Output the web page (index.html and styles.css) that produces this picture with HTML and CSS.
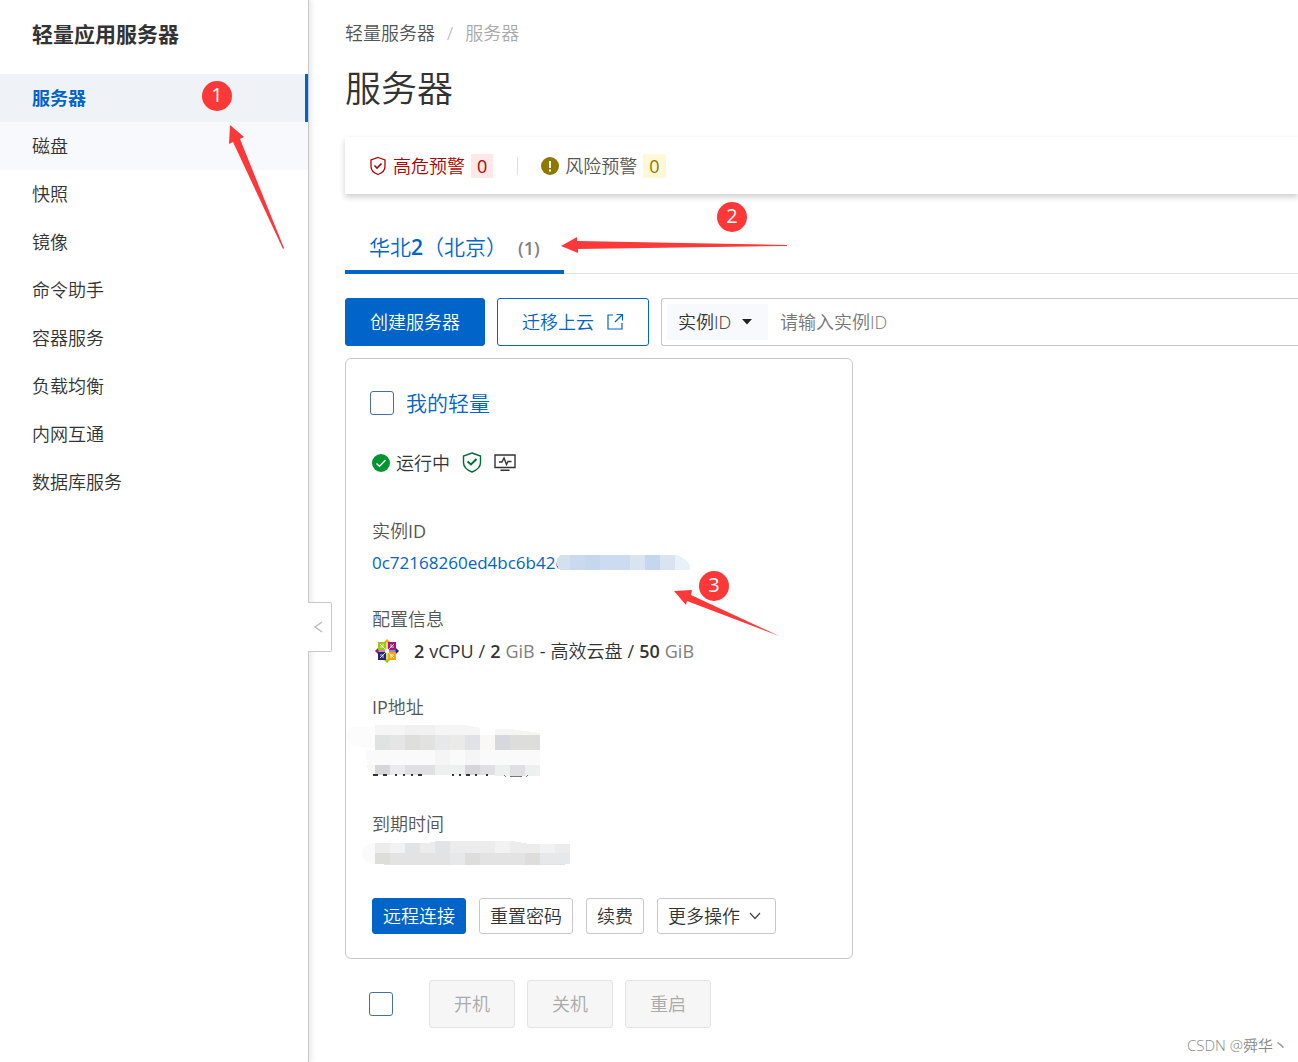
FILE: index.html
```html
<!DOCTYPE html>
<html lang="zh-CN">

<head>
    <meta charset="UTF-8">
    <meta name="viewport" content="width=device-width, initial-scale=1.0">
    <title>轻量应用服务器</title>
    <link rel="stylesheet" href="styles.css">
</head>

<body>

    <aside class="sidebar">
        <h2 class="sidebar-title">轻量应用服务器</h2>
        <nav class="menu">
            <a href="#" class="active">服务器</a>
            <a href="#" class="hovered">磁盘</a>
            <a href="#">快照</a>
            <a href="#">镜像</a>
            <a href="#">命令助手</a>
            <a href="#">容器服务</a>
            <a href="#">负载均衡</a>
            <a href="#">内网互通</a>
            <a href="#">数据库服务</a>
        </nav>
        <button type="button" class="collapse" aria-label="收起菜单">
            <svg width="10" height="12" viewBox="0 0 10 12"><path d="M9 1 L2 6 L9 11" fill="none" stroke="#b5b5b5" stroke-width="1.2"/></svg>
        </button>
    </aside>

    <main class="content">
        <nav class="breadcrumb">
            <a href="#">轻量服务器</a>
            <span class="sep">/</span>
            <span class="current">服务器</span>
        </nav>
        <h1>服务器</h1>

        <section class="alerts">
            <div class="alert danger">
                <svg width="18" height="20" viewBox="0 0 18 20" fill="none" stroke="#b30000" stroke-width="1.3"><path d="M9 1.5 L16 4 V10.5 C16 14 13 17 9 18.5 C5 17 2 14 2 10.5 V4 Z"/><path d="M5.5 9.5 L8 12 L12.5 7.5" stroke-width="1.6"/></svg>
                <span>高危预警</span>
                <span class="count">0</span>
            </div>
            <div class="alert warning">
                <svg width="18" height="18" viewBox="0 0 18 18"><circle cx="9" cy="9" r="9" fill="#8f7700"/><path d="M8 4 H10 V11 H8 Z M8 12.5 H10 V14.5 H8 Z" fill="#fff"/></svg>
                <span>风险预警</span>
                <span class="count">0</span>
            </div>
        </section>

        <div class="tabs">
            <a href="#" class="tab">华北<b>2</b>（北京）<span class="tab-count">(1)</span></a>
        </div>

        <div class="toolbar">
            <button type="button" class="btn primary">创建服务器</button>
            <button type="button" class="btn outline">迁移上云
                <svg width="18" height="18" viewBox="0 0 18 18" fill="none" stroke="#0064c8" stroke-width="1.2"><path d="M7 2 H2 V16 H16 V10"/><path d="M10.5 1.5 H16.5 V7.5 M16 2 L9 9"/></svg>
            </button>
            <div class="search">
                <div class="select-wrap">
                    <select aria-label="搜索类型">
                        <option>实例ID</option>
                    </select>
                    <svg class="caret" width="10" height="6" viewBox="0 0 10 6"><path d="M0 0 H10 L5 5.5 Z" fill="#222"/></svg>
                </div>
                <input type="text" aria-label="实例ID" placeholder="请输入实例ID">
            </div>
        </div>

        <article class="card">
            <div class="card-title">
                <input type="checkbox" id="server1">
                <label for="server1">我的轻量</label>
            </div>
            <div class="status">
                <svg width="18" height="18" viewBox="0 0 18 18"><circle cx="9" cy="9" r="9" fill="#00962f"/><path d="M4.5 9.5 L7.5 12.2 L13.5 6.2" fill="none" stroke="#fff" stroke-width="1.5"/></svg>
                <span>运行中</span>
                <svg class="shield" width="20" height="22" viewBox="0 0 20 22" fill="none" stroke="#006b35" stroke-width="1.4"><path d="M10 1 L18.5 4 V10.5 C18.5 15 15 18 10 20 C5 18 1.5 15 1.5 10.5 V4 Z"/><path d="M5.5 9.5 L9 12.5 L14.5 7" stroke-width="2"/></svg>
                <svg class="monitor" width="22" height="18" viewBox="0 0 22 18" fill="none" stroke="#333" stroke-width="1.4"><path d="M1 1 H21 V13.5 H1 Z M6.5 16.3 H15.5"/><path d="M5 8 H8 L10 4 L12.5 10.5 L14 7.5 H17.5" stroke-width="1.4"/></svg>
            </div>

            <div class="field">
                <div class="field-label">实例<b>ID</b></div>
                <div class="field-value id-value">
                    <a href="#">0c72168260ed4bc6b42c</a>
                    <svg class="mask" width="134" height="15" viewBox="0 0 134 15" shape-rendering="crispEdges">
                        <path d="M4 0 H14 V15 H4 Q-3 7 4 0" fill="#d3e0f2"/>
                        <path d="M14 0 H29 V15 H14 Z" fill="#cbd9f0"/>
                        <path d="M29 0 H44 V15 H29 Z M89 0 H104 V15 H89 Z" fill="#c6d6ef"/>
                        <path d="M44 0 H74 V15 H44 Z" fill="#ccdbf2"/>
                        <path d="M74 0 H89 V15 H74 Z M104 0 H119 V15 H104 Z" fill="#d8e3f4"/>
                        <path d="M119 0 H121 Q131 4 134 11 V15 H119 Z" fill="#e8f0fa"/>
                    </svg>
                </div>
            </div>

            <div class="field">
                <div class="field-label">配置信息</div>
                <div class="field-value specs">
                    <svg class="os" width="24" height="24" viewBox="0 0 24 24">
                        <path d="M12 0 L15.5 3.5 H8.5 Z" fill="#f5a70b"/>
                        <path d="M24 12 L20.5 15.5 V8.5 Z" fill="#262577"/>
                        <path d="M12 24 L15.5 20.5 H8.5 Z" fill="#96c80f"/>
                        <path d="M0 12 L3.5 15.5 V8.5 Z" fill="#a1167c"/>
                        <path d="M3 3 H11 V11 H3 Z" fill="#96cd12"/>
                        <path d="M13 3 H21 V11 H13 Z" fill="#a1167c"/>
                        <path d="M3 13 H11 V21 H3 Z" fill="#262577"/>
                        <path d="M13 13 H21 V21 H13 Z" fill="#f5a70b"/>
                        <path d="M12 2 V10" stroke="#f5a70b"/>
                        <path d="M14 12 H22" stroke="#262577"/>
                        <path d="M12 14 V22" stroke="#96c80f"/>
                        <path d="M2 12 H10" stroke="#a1167c"/>
                        <path d="M5 5 L19 19 M19 5 L5 19 M8 5 V8 H5 M16 5 V8 H19 M8 19 V16 H5 M16 19 V16 H19" fill="none" stroke="#fff" stroke-width="0.8"/>
                    </svg>
                    <b>2</b>
                    <span>vCPU</span>
                    <span>/</span>
                    <b>2</b>
                    <span class="unit">GiB</span>
                    <span>-</span>
                    <span class="disk">高效云盘</span>
                    <span>/</span>
                    <b>50</b>
                    <span class="unit">GiB</span>
                </div>
            </div>

            <div class="field">
                <div class="field-label"><b>IP</b>地址</div>
                <svg class="mosaic" width="196" height="69" viewBox="0 0 196 69" shape-rendering="crispEdges">
                    <path d="M13 8 Q0 7 0 17 Q0 28 13 28 H28 V8 Z" fill="#fcfcfc"/>
                    <path d="M28 6 H118 L133 9 V16 H28 Z" fill="#f5f5f5"/>
                    <path d="M58 6 H88 V16 H58 Z" fill="#f1f1f1"/>
                    <path d="M148 10 H163 L193 14 V16 H148 Z" fill="#f5f5f4"/>
                    <path d="M28 16 H43 V31 H28 Z" fill="#e1e3e2"/>
                    <path d="M43 16 H58 V31 H43 Z" fill="#e5e5e5"/>
                    <path d="M58 16 H73 V31 H58 Z" fill="#dededc"/>
                    <path d="M73 16 H88 V31 H73 Z" fill="#e2e2e0"/>
                    <path d="M88 16 H103 V31 H88 Z" fill="#e6e8ea"/>
                    <path d="M103 16 H118 V31 H103 Z" fill="#eaebe9"/>
                    <path d="M118 16 H133 V31 H118 Z" fill="#e0e2e5"/>
                    <path d="M133 16 H148 V31 H133 Z" fill="#f9f8f6"/>
                    <path d="M148 16 H163 V31 H148 Z" fill="#d6d8db"/>
                    <path d="M163 16 H193 V31 H163 Z" fill="#dddddb"/>
                    <path d="M28 31 H193 V46 H22 Q17 40 20 31 Z" fill="#f9faf9"/>
                    <path d="M88 31 H103 V46 H88 Z M118 31 H133 V46 H118 Z" fill="#f5f5f5"/>
                    <path d="M19 46 H28 V56 Q21 54 19 46" fill="#f7f7f5"/>
                    <path d="M28 46 H43 V56 H28 Z M118 46 H133 V56 H118 Z" fill="#d6d6d8"/>
                    <path d="M43 46 H58 V56 H43 Z" fill="#ebebee"/>
                    <path d="M58 46 H88 V56 H58 Z M133 46 H148 V56 H133 Z M163 46 H178 V57 H163 Z" fill="#e0dfe2"/>
                    <path d="M88 46 H118 V56 H88 Z M148 46 H163 V57 H148 Z M178 46 H193 V57 H178 Z" fill="#eeefef"/>
                    <path d="M26 56 H31 M36 56 H40 M48 56 H50 M56 56 H58 M64 56 H66 M71 56 H75 M105 56 H107 M112 56 H114 M119 56 H123 M128 56 H130 M139 56 H141" stroke="#333" stroke-width="2"/>
                    <path d="M157 56 L159 58 M163 57 H175 M179 58 L181 56" fill="none" stroke="#777" stroke-width="1"/>
                </svg>
            </div>

            <div class="field">
                <div class="field-label">到期时间</div>
                <svg class="mosaic" width="226" height="38" viewBox="0 0 226 38" shape-rendering="crispEdges">
                    <path d="M28 7 Q15 8 15 17 Q15 28 28 28 Z" fill="#fafafa"/>
                    <path d="M28 7 H80 L90 5 H165 L183 8 H223 V17 H28 Z" fill="#ececec"/>
                    <path d="M43 7 H58 V17 H43 Z M148 5 H163 V17 H148 Z M193 8 H208 V17 H193 Z" fill="#f1f2f1"/>
                    <path d="M58 7 H73 V17 H58 Z M88 5 H103 V17 H88 Z" fill="#e2e3e5"/>
                    <path d="M28 17 H223 V28 H218 V29 H37 V28 H28 Z" fill="#e3e3e3"/>
                    <path d="M28 17 H43 V28 H28 Z M118 17 H133 V29 H118 Z M178 17 H193 V29 H178 Z" fill="#dddddb"/>
                    <path d="M103 17 H118 V29 H103 Z M193 17 H223 V28 H193 Z" fill="#e7e8ea"/>
                </svg>
            </div>

            <div class="card-actions">
                <button type="button" class="btn small primary">远程连接</button>
                <button type="button" class="btn small">重置密码</button>
                <button type="button" class="btn small">续费</button>
                <button type="button" class="btn small more">更多操作
                    <svg width="12" height="8" viewBox="0 0 12 8"><path d="M1 1 L6 6.5 L11 1" fill="none" stroke="#444" stroke-width="1.2"/></svg>
                </button>
            </div>
        </article>

        <div class="bulk">
            <input type="checkbox" aria-label="全选">
            <button type="button" class="btn" disabled>开机</button>
            <button type="button" class="btn" disabled>关机</button>
            <button type="button" class="btn" disabled>重启</button>
        </div>
    </main>

    <!-- Step markers drawn over the page -->
    <svg class="steps" width="800" height="660" viewBox="0 0 800 660">
        <path d="M230 125 L244 137 L240 139 L284 248 L283 249 L233 142 L229 144 Z"/>
        <path d="M561 246 L577 237 V241 L787 245 V246 L578 249 V253 Z"/>
        <path d="M674 591 L692 590 L691 595 L779 636 L687 601 L686 605 Z"/>
        <circle cx="217" cy="96" r="15"/>
        <circle cx="732" cy="217" r="15"/>
        <circle cx="714" cy="586" r="15"/>
        <text x="217" y="102">1</text>
        <text x="732" y="223">2</text>
        <text x="714" y="592">3</text>
    </svg>

    <span class="watermark">CSDN @舜华丶</span>

</body>

</html>
```

FILE: styles.css
```css
* {
    box-sizing: border-box;
}

body {
    margin: 0;
    display: flex;
    position: relative;
    min-height: 100vh;
    overflow-x: hidden;
    font-family: "Open Sans", "Noto Sans CJK SC", sans-serif;
    font-size: 18px;
    font-weight: 350;
    line-height: 24px;
    color: #333;
    background-color: #fff;
}

a {
    color: inherit;
    text-decoration: none;
}

b {
    font-weight: 600;
}

svg {
    flex-shrink: 0;
}

button, input, select {
    font: inherit;
    color: inherit;
}

/* Sidebar */
.sidebar {
    position: relative;
    flex: 0 0 309px;
    border-right: 1px solid #c8c8c8;
    box-shadow: 2px 0 6px rgba(0, 0, 0, 0.1);
}

.sidebar-title {
    margin: 0;
    padding: 22px 32px 28px;
    font-size: 21px;
    font-weight: 700;
}

.menu a {
    display: block;
    height: 48px;
    padding: 0 32px;
    line-height: 48px;
}

.menu .active {
    color: #0064c8;
    font-weight: 700;
    background-color: #eff3f8;
    border-right: 3px solid #0064c8;
}

.menu .hovered {
    background-color: #f7f9fc;
}

.collapse {
    position: absolute;
    top: 602px;
    left: 308px;
    display: flex;
    align-items: center;
    width: 24px;
    height: 50px;
    padding: 0 5px;
    border: 1px solid #c8c8c8;
    border-left: none;
    border-radius: 0 2px 2px 0;
    background-color: #fff;
}

/* Main area */
.content {
    flex: 1;
    min-width: 0;
    padding: 21px 0 32px 36px;
}

.breadcrumb {
    display: flex;
    gap: 12px;
    color: #555;
}

.breadcrumb .sep, .breadcrumb .current {
    color: #aaa;
}

h1 {
    margin: 16px 0 20px;
    font-size: 36px;
    font-weight: 350;
    line-height: 56px;
}

.alerts {
    display: flex;
    align-items: center;
    height: 57px;
    padding: 0 24px;
    box-shadow: 0 3px 6px rgba(0, 0, 0, 0.2);
}

.alert {
    display: flex;
    align-items: center;
    gap: 6px;
    color: #555;
}

.alert .count {
    padding: 0 6px;
    font-weight: 400;
}

.alert.danger {
    color: #b30000;
}

.danger .count {
    background-color: #ffe8e8;
}

.warning {
    margin-left: 24px;
}

.warning::before {
    content: "";
    width: 1px;
    height: 18px;
    margin-right: 17px;
    background-color: #ddd;
}

.warning .count {
    color: #8f7700;
    background-color: #fff8d6;
}

.tabs {
    display: flex;
    height: 56px;
    margin: 24px 0;
    border-bottom: 1px solid #e3e3e3;
}

.tab {
    height: 56px;
    padding: 0 24px;
    border-bottom: 4px solid #0064c8;
    font-size: 21px;
    line-height: 58px;
    color: #0064c8;
}

.tab-count {
    margin-left: 11px;
    font-size: 18px;
    font-weight: 600;
    color: #808080;
}

.toolbar {
    display: flex;
    gap: 12px;
}

.btn {
    display: flex;
    align-items: center;
    justify-content: center;
    gap: 12px;
    height: 48px;
    padding: 0 24px;
    border: 1px solid #c8c8c8;
    border-radius: 3px;
    background-color: #fff;
    white-space: nowrap;
}

.btn.primary {
    border-color: #0064c8;
    background-color: #0064c8;
    color: #fff;
}

.btn.outline {
    border-color: #0064c8;
    color: #0064c8;
}

.btn.small {
    height: 36px;
    padding: 0 10px;
}

.btn.more {
    gap: 9px;
    padding-right: 14px;
}

.btn:disabled {
    border-color: #e3e3e3;
    background-color: #f6f6f6;
    color: #aaa;
}

.search {
    flex: 1;
    display: flex;
    align-items: center;
    height: 48px;
    padding-left: 5px;
    border: 1px solid #c8c8c8;
    border-right: none;
    border-radius: 3px 0 0 3px;
}

.select-wrap {
    position: relative;
}

.select-wrap select {
    appearance: none;
    width: 101px;
    height: 36px;
    padding: 0 11px;
    border: none;
    background-color: #f7f9fc;
}

.caret {
    position: absolute;
    top: 15px;
    right: 16px;
    pointer-events: none;
}

.search input {
    flex: 1;
    min-width: 0;
    padding: 0 12px;
    border: none;
    outline: none;
}

.search input::placeholder {
    color: #777;
}

/* Server card */
.card {
    width: 508px;
    max-width: 100%;
    margin-top: 12px;
    padding: 24px 26px;
    border: 1px solid #c8c8c8;
    border-radius: 6px;
}

input[type="checkbox"] {
    appearance: none;
    width: 24px;
    height: 24px;
    margin: 0;
    border: 1px solid #4a6f9c;
    border-radius: 3px;
    background-color: #fff;
}

.card-title {
    display: flex;
    align-items: center;
    gap: 12px;
    height: 40px;
    margin-left: -2px;
    font-size: 21px;
    color: #0064c8;
}

.status {
    display: flex;
    align-items: center;
    gap: 6px;
    margin: 28px 0 44px;
}

.status .shield, .status .monitor {
    margin-left: 6px;
}

.field {
    margin-bottom: 24px;
}

.field-label {
    color: #555;
}

.field-label b {
    font-weight: 500;
}

.field-value {
    display: flex;
    align-items: center;
    height: 40px;
    font-weight: 400;
}

.specs {
    gap: 5px;
}

.disk {
    font-weight: 350;
}

.id-value {
    position: relative;
    font-size: 17px;
    color: #0064c8;
}

.mask {
    position: absolute;
    top: 12px;
    left: 184px;
}

.os {
    margin: 0 10px 0 3px;
}

.unit {
    color: #808080;
}

.mosaic {
    display: block;
    margin-left: -25px;
}

.card-actions {
    display: flex;
    gap: 13px;
}

.bulk {
    display: flex;
    align-items: center;
    gap: 12px;
    margin-top: 21px;
    padding-left: 24px;
}

.bulk input {
    margin-right: 24px;
}

/* Overlays */
.steps {
    position: absolute;
    top: 0;
    left: 0;
    fill: #fc3838;
    pointer-events: none;
}

.steps text {
    fill: #fff;
    font-size: 20px;
    font-weight: 400;
    text-anchor: middle;
}

.watermark {
    position: absolute;
    right: 10px;
    bottom: 5px;
    font-size: 15px;
    color: #888;
}
```
